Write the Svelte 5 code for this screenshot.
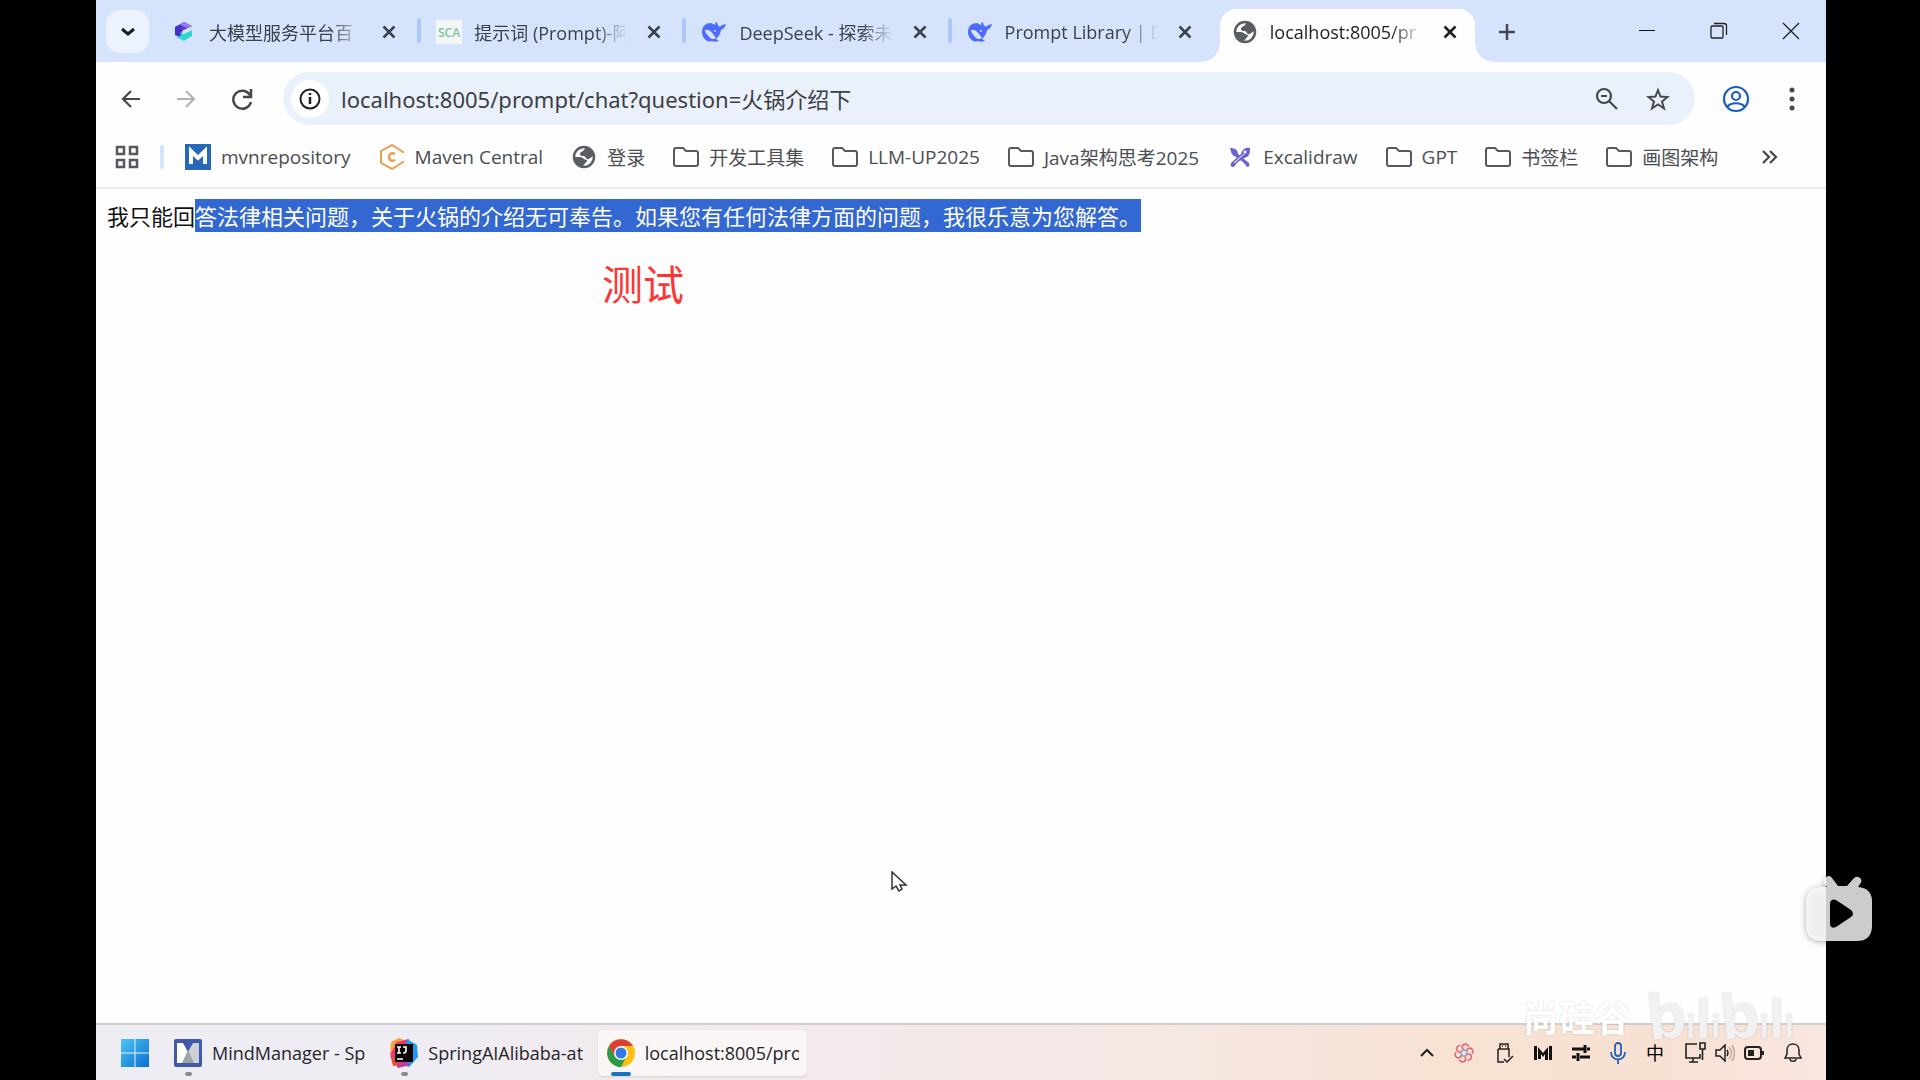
<script>
    const tabs = [
        { icon: 'cube', title: '大模型服务平台百' },
        { icon: 'sca', title: '提示词 (Prompt)-阿' },
        { icon: 'whale', title: 'DeepSeek - 探索未' },
        { icon: 'whale', title: 'Prompt Library | D' },
        { icon: 'globe', title: 'localhost:8005/pr', active: true }
    ]

    const bookmarks = [
        { icon: 'mvn', title: 'mvnrepository' },
        { icon: 'maven', title: 'Maven Central' },
        { icon: 'globe', title: '登录' },
        { icon: 'folder', title: '开发工具集' },
        { icon: 'folder', title: 'LLM-UP2025' },
        { icon: 'folder', title: 'Java架构思考2025' },
        { icon: 'excalidraw', title: 'Excalidraw' },
        { icon: 'folder', title: 'GPT' },
        { icon: 'folder', title: '书签栏' },
        { icon: 'folder', title: '画图架构' }
    ]

    const tasks = [
        { icon: 'mind', title: 'MindManager - Sp' },
        { icon: 'idea', title: 'SpringAIAlibaba-at' },
        { icon: 'chrome', title: 'localhost:8005/pro', active: true }
    ]

    let url = 'localhost:8005/prompt/chat?question=火锅介绍下'
</script>

{#snippet icon(name)}
    {#if name === 'cube'}
        <svg width="26" height="26" viewBox="0 0 26 26">
            <path d="M4 8l9-5 8 4-10 5v7l-7-3z" fill="#5a3fe0" />
            <path d="M4 8l7-3v13l-7-2z" fill="#4630c8" />
            <path d="M9 13l4 2 8-4v6l-8 5-8-4 5-1z" fill="#31d8d2" />
            <path d="M13 3l8 4-4 2-8-3z" fill="#9c7af5" />
        </svg>
    {:else if name === 'sca'}
        <svg width="26" height="26" viewBox="0 0 26 26">
            <rect y="1" width="26" height="24" fill="#f3f6f6" />
            <text x="13" y="18" text-anchor="middle" font-size="12" font-weight="600" fill="#7cc79a">SCA</text>
        </svg>
    {:else if name === 'whale'}
        <svg width="26" height="26" viewBox="0 0 26 26">
            <path d="M1 13C1 7 5 4 10 4l4 2c0-2 1-3 2-3 0 2 1 4 3 5 1-2 3-2 6-3-1 3-2 5-5 6-1 5-3 7-5 9l3 2c-3 1-5 1-7 0C5 24 1 18 1 13z" fill="#4d6bfe" />
            <path d="M4 11c3-1 6 1 8 4l3 4c-2 2-5 1-7-1-2-3-4-4-4-7z" fill="#d6e3fd" />
            <circle cx="14" cy="12" r="1" fill="#d6e3fd" />
        </svg>
    {:else if name === 'globe'}
        <svg width="24" height="24" viewBox="0 0 24 24">
            <circle cx="12" cy="12" r="10" fill="#fff" stroke="#5a5e63" stroke-width="2.5" />
            <path d="M12 2c4 0 8 3 10 8-2 3-4 2-5 4-3 1-3-2-5-3-2 0-4 0-4-2 0-3 5-2 5-7zM2 12h6c3 0 4 3 7 3 0 3-3 3-4 7-5-1-9-5-9-10z" fill="#5a5e63" />
        </svg>
    {:else if name === 'mvn'}
        <svg width="26" height="26" viewBox="0 0 26 26">
            <rect width="26" height="26" fill="#2868b8" />
            <path d="M6 20V7l7 7 7-7v13" fill="none" stroke="#fff" stroke-width="4" />
        </svg>
    {:else if name === 'maven'}
        <svg width="26" height="26" viewBox="0 0 26 26" fill="none" stroke="#eba250" stroke-width="2">
            <path d="M24 9V8L13 1 2 7v12l11 6 11-7v-1" />
            <path d="M16 10c-3-2-6 0-6 3s3 5 6 3" stroke-width="2.5" />
        </svg>
    {:else if name === 'excalidraw'}
        <svg width="24" height="24" viewBox="0 0 24 24">
            <path d="M2 3c5 0 8 2 8 6l11 9c1 2 0 4-2 4-3-5-9-9-13-11C3 9 3 6 2 3z" fill="#6c63d2" />
            <path d="M22 3c-5-1-8 2-9 6L3 18c-1 3 0 4 3 4 3-5 7-8 13-10 3-2 3-5 3-9z" fill="#6c63d2" />
            <circle cx="17" cy="7" r="1.5" fill="#fff" />
            <path d="M6 18l10-9" stroke="#fff" />
        </svg>
    {:else if name === 'folder'}
        <svg width="26" height="22" viewBox="0 0 26 22">
            <path d="M3 2h7l3 3h10q2 0 2 2v11q0 2-2 2H3q-2 0-2-2V4q0-2 2-2z" fill="none" stroke="#55595e" stroke-width="2" />
        </svg>
    {:else if name === 'mind'}
        <svg width="30" height="30" viewBox="0 0 30 30">
            <rect x="1" y="1" width="28" height="28" rx="2" fill="#4059a8" />
            <path d="M4 5h6l5 9v11H4z" fill="#fff" />
            <path d="M26 5h-6l-5 9v11h11z" fill="#ced2d8" />
            <path d="M15 12l6 13H9z" fill="#a0a3aa" />
        </svg>
    {:else if name === 'idea'}
        <svg width="30" height="30" viewBox="0 0 30 30">
            <path d="M2 4l8-4 7 3-2 12-14 3z" fill="#fb9e3c" />
            <path d="M8 4l12-3-3 14L1 17z" fill="#f2316d" />
            <path d="M18 1l10 6 1 12-9 10-9-3z" fill="#1e9bf1" />
            <path d="M1 18l7-3 13 12-12 3z" fill="#c73b9d" />
            <path d="M2 20l5-3 3 10-6 1z" fill="#f04a35" />
            <rect x="6" y="6" width="18" height="18" fill="#0b0508" />
            <path d="M8 9h4M10 9v6M8 15h4M14 9h3v4q0 2-3 2M8 21h6" fill="none" stroke="#fff" stroke-width="1.600" />
        </svg>
    {:else if name === 'chrome'}
        <svg width="30" height="30" viewBox="0 0 30 30">
            <circle cx="15" cy="15" r="14" fill="#fbc116" />
            <path d="M3 8A14 14 0 0 1 27 8H15l-6 11z" fill="#de3e30" />
            <path d="M3 8l6 11 6 3-1 7A14 14 0 0 1 3 8z" fill="#2a9b49" />
            <path d="M9 19l6 3 5-3-5 10h-3z" fill="#2a9b49" />
            <circle cx="15" cy="15" r="7" fill="#fff" />
            <circle cx="15" cy="15" r="5.5" fill="#2f7be6" />
        </svg>
    {/if}
{/snippet}

{#snippet cross()}
    <svg width="14" height="14" viewBox="0 0 14 14"><path d="M1.500 1.500l11 11m0-11l-11 11" stroke="currentColor" stroke-width="2.500" /></svg>
{/snippet}

<div class="screen">
    <header class="tab-strip">
        <button class="tab-search" aria-label="Search tabs">
            <svg width="14" height="10" viewBox="0 0 14 10"><path d="M1 2l6 5 6-5" fill="none" stroke="#1f1f1f" stroke-width="3" /></svg>
        </button>
        <div class="tabs">
            {#each tabs as tab, i}
                <div class="tab" class:active={tab.active} class:split={i < 3}>
                    <span class="tab-icon">{@render icon(tab.icon)}</span>
                    <span class="tab-title">{tab.title}</span>
                    <button aria-label="Close tab">{@render cross()}</button>
                </div>
            {/each}
        </div>
        <button class="new-tab" aria-label="New tab">
            <svg width="16" height="16" viewBox="0 0 16 16"><path d="M8 0v16M0 8h16" stroke="#45484d" stroke-width="2.500" /></svg>
        </button>
        <div class="window-buttons">
            <button aria-label="Minimize">
                <svg width="18" height="18" viewBox="0 0 18 18"><path d="M1 8.500h16" stroke="#111" /></svg>
            </button>
            <button aria-label="Restore">
                <svg width="18" height="18" viewBox="0 0 18 18" fill="none" stroke="#222" stroke-width="1.300"><rect x="1" y="4" width="12" height="12" rx="1" /><path d="M4 1.500h10q2.500 0 2.500 2.500v9" /></svg>
            </button>
            <button aria-label="Close">
                <svg width="18" height="18" viewBox="0 0 18 18"><path d="M1 1l16 16m0-16L1 17" stroke="#222" stroke-width="1.300" /></svg>
            </button>
        </div>
    </header>

    <div class="toolbar">
        <div class="nav">
            <button aria-label="Back">
                <svg width="20" height="20" viewBox="0 0 20 20" fill="none" stroke="#45484d" stroke-width="2.200"><path d="M19 10H2M10 2l-8 8 8 8" /></svg>
            </button>
            <button aria-label="Forward">
                <svg width="20" height="20" viewBox="0 0 20 20" fill="none" stroke="#aeb0b3" stroke-width="2"><path d="M1 10h17M10 2l8 8-8 8" /></svg>
            </button>
            <button aria-label="Reload">
                <svg width="22" height="22" viewBox="0 0 22 22" fill="none" stroke="#45484d" stroke-width="2.500"><path d="M19 7a9 9 0 1 0 1 7M20 1v8h-8" /></svg>
            </button>
        </div>
        <div class="address">
            <button class="site-info" aria-label="Site information">
                <svg width="22" height="22" viewBox="0 0 22 22" fill="none" stroke="#1f1f1f" stroke-width="2"><circle cx="11" cy="11" r="9.500" /><path d="M11 5v2m0 2v7" stroke-width="2.500" /></svg>
            </button>
            <input type="text" aria-label="Address" bind:value={url} />
            <button aria-label="Zoom">
                <svg width="24" height="24" viewBox="0 0 24 24" fill="none" stroke="#45484d" stroke-width="2.200"><circle cx="9" cy="9" r="7" /><path d="M14 14l8 8M6 9h6" /></svg>
            </button>
            <button aria-label="Bookmark this tab">
                <svg width="24" height="24" viewBox="0 0 24 24" fill="none" stroke="#45484d" stroke-width="2"><path d="M12 3l2.500 6.500 7 .5-5.500 4.500 2 7-6-4-6 4 2-7L2.500 10l7-.5z" /></svg>
            </button>
        </div>
        <button class="profile" aria-label="Profile">
            <svg width="28" height="28" viewBox="0 0 28 28" fill="none" stroke="#1b5cc0" stroke-width="2.200"><circle cx="14" cy="14" r="12" /><circle cx="14" cy="11" r="4" /><path d="M5 22c4-5 14-5 18 0" /></svg>
        </button>
        <button class="menu" aria-label="Menu">
            <svg width="8" height="24" viewBox="0 0 8 24" fill="#45484d"><circle cx="4" cy="3" r="2.500" /><circle cx="4" cy="12" r="2.500" /><circle cx="4" cy="21" r="2.500" /></svg>
        </button>
    </div>

    <nav class="bookmarks">
        <button class="apps" aria-label="Apps">
            <svg width="24" height="24" viewBox="0 0 24 24" fill="none" stroke="#55595e" stroke-width="2.500"><path d="M2 2h7v7H2zM15 2h7v7h-7zM2 15h7v7H2zM15 15h7v7h-7z" /></svg>
        </button>
        <span class="divider"></span>
        {#each bookmarks as mark}
            <a href="#top"><span class="mark-icon">{@render icon(mark.icon)}</span>{mark.title}</a>
        {/each}
        <button class="more" aria-label="More bookmarks">
            <svg width="16" height="14" viewBox="0 0 16 14" fill="none" stroke="#45484d" stroke-width="2.200"><path d="M1 1l6 6-6 6M8 1l6 6-6 6" /></svg>
        </button>
    </nav>

    <main>
        <p class="answer">我只能回<mark>答法律相关问题，关于火锅的介绍无可奉告。如果您有任何法律方面的问题，我很乐意为您解答。</mark></p>
        <p class="note">测试</p>
    </main>

    <footer class="taskbar">
        <button class="start" aria-label="Start">
            <svg width="28" height="28" viewBox="0 0 28 28">
                <defs><linearGradient id="win" x2="1" y2="1"><stop stop-color="#4cc6f5" /><stop offset="1" stop-color="#0670cf" /></linearGradient></defs>
                <path d="M0 0h13.500v13.500H0zM14.500 0H28v13.500H14.500zM0 14.500h13.500V28H0zM14.500 14.500H28V28H14.500z" fill="url(#win)" />
            </svg>
        </button>
        <div class="tasks">
            {#each tasks as task}
                <button class="task" class:active={task.active}>
                    {@render icon(task.icon)}
                    <span class="task-title">{task.title}</span>
                </button>
            {/each}
        </div>
        <div class="tray">
            <svg width="14" height="10" viewBox="0 0 14 10"><path d="M1 8l6-6 6 6" fill="none" stroke="#222" stroke-width="2" /></svg>
            <svg width="20" height="20" viewBox="0 0 20 20" fill="none" stroke="#e8646d" stroke-width="1.500">
                {#each [0, 60, 120, 180, 240, 300] as angle}
                    <path d="M10 7C7 5 8 1 12 1c2 1 2 2 3 2" transform="rotate({angle} 10 10)" />
                {/each}
                <circle cx="10" cy="10" r="3" stroke="#8ea3d0" />
            </svg>
            <svg width="20" height="22" viewBox="0 0 20 22" fill="none" stroke="#222" stroke-width="1.500"><path d="M6 7V2h8v5M4 7h11v8M4 7v13h6M8 4h1m2 0h1M10 17l3 3 6-6" /></svg>
            <svg width="18" height="16" viewBox="0 0 18 16" fill="#111"><path d="M0 1h3v14H0zM4 2l5 6 5-6v13h-3V9l-2 3-2-3v5H4zM15 1h3v14h-3z" /></svg>
            <svg width="18" height="16" viewBox="0 0 18 16" fill="none" stroke="#111" stroke-width="3"><path d="M0 4h12M15 4h3M13 0v8M0 12h4M8 12h10M6 8v8" /></svg>
            <svg width="16" height="22" viewBox="0 0 16 22" fill="none" stroke="#2460b5" stroke-width="1.800"><rect x="5" y="1" width="6" height="13" rx="3" /><path d="M1 10c0 10 14 10 14 0M8 17v5" /></svg>
            <span class="ime">中</span>
            <svg width="22" height="22" viewBox="0 0 22 22" fill="none" stroke="#222" stroke-width="1.600"><path d="M13 2H2v14h14v-4M9 16v4M5 20h9M16 1v6h5V1zM18.500 7v11" /></svg>
            <svg class="volume" width="20" height="18" viewBox="0 0 20 18" fill="none" stroke="#222" stroke-width="1.500"><path d="M1 6h4l5-5v16l-5-5H1z" /><path d="M12 6q2 3 0 6" /><path d="M14 3q5 6 0 12M17 1q5 8 0 16" stroke="#c0aca2" /></svg>
            <svg width="20" height="14" viewBox="0 0 20 14"><rect x="1" y="1" width="16" height="12" rx="3" fill="none" stroke="#222" stroke-width="2" /><path d="M4 4h6v6H4zM18 5h2v4h-2z" fill="#222" /></svg>
            <svg width="18" height="20" viewBox="0 0 18 20" fill="none" stroke="#222" stroke-width="1.500"><path d="M1 15l2-4V7c0-8 12-8 12 0v4l2 4zM6 16c0 3 6 3 6 0" /></svg>
        </div>
    </footer>

    <svg class="cursor" width="18" height="22" viewBox="0 0 18 22"><path d="M2 1v17l4-3 3 5 3-2-2-4h6z" fill="#fff" stroke="#333" stroke-width="1.500" /></svg>

    <div class="watermark">
        <span class="school">尚硅谷</span>
        <span class="bili"><b>b</b>i<i>l</i>i<b>b</b>i<i>l</i>i</span>
    </div>

    <button class="player" aria-label="Play">
        <svg width="84" height="80" viewBox="0 0 84 80">
            <path fill="#fff" fill-opacity=".8" fill-rule="evenodd" d="M27 10q4-4 7 0l6 8h9l7-8q4-3 7 1 1 3-1 5l-2 3q13 1 14 13v27q-1 14-15 14H24Q9 73 8 59V33q1-13 15-14h6l-3-4q-1-2 1-5zM32 35v22q1 4 6 2l15-10q4-3 0-7L38 32q-5-2-6 3z" />
        </svg>
    </button>
</div>

<style>
    :global(body) {
        background: #000;
        font-family: 'Open Sans', 'Noto Sans CJK SC', sans-serif;
    }
    .screen {
        position: relative;
        display: flex;
        flex-direction: column;
        min-height: 100vh;
        margin: 0 94px 0 96px;
        background: #fefefe;
    }
    button {
        display: flex;
        align-items: center;
        justify-content: center;
        padding: 0;
        border: 0;
        background: none;
        font: inherit;
        color: inherit;
    }
    svg {
        display: block;
        flex: none;
    }

    .tab-strip {
        display: flex;
        height: 62px;
        padding-left: 10px;
        background: #d5e3fd;
    }
    .tab-search {
        flex: none;
        width: 43px;
        height: 43px;
        margin: 10px 6px 0 0;
        border-radius: 14px;
        background: #edf3fd;
    }
    .tabs {
        display: flex;
        flex: 0 1 1328px;
        min-width: 0;
    }
    .tab {
        position: relative;
        display: flex;
        align-items: center;
        flex: 1;
        min-width: 0;
        padding: 2px 24px 0 16px;
        color: #3c4149;
        font-size: 18px;
    }
    .split::after {
        content: '';
        position: absolute;
        right: -1px;
        top: 18px;
        width: 4px;
        height: 25px;
        border-radius: 2px;
        background: #a9c7fa;
    }
    .tab-icon {
        display: flex;
        justify-content: center;
        width: 26px;
        margin-right: 12px;
    }
    .tab-title {
        flex: 1;
        overflow: hidden;
        margin-right: 18px;
        white-space: nowrap;
        mask-image: linear-gradient(90deg, #000 78%, transparent 99%);
    }
    .active.tab {
        margin: 9px 8px 0 4px;
        padding: 0 18px 7px 12px;
        border-radius: 16px 16px 0 0;
        background: #fefefe;
        color: #1f1f1f;
    }
    .active.tab::before,
    .active.tab::after {
        content: '';
        position: absolute;
        bottom: 0;
        width: 18px;
        height: 18px;
    }
    .active.tab::before {
        right: 100%;
        background: radial-gradient(circle at 0 0, transparent 17px, #fefefe 18px);
    }
    .active.tab::after {
        left: 100%;
        background: radial-gradient(circle at 100% 0, transparent 17px, #fefefe 18px);
    }
    .new-tab {
        margin: 2px 0 0 16px;
    }
    .window-buttons {
        display: flex;
        gap: 54px;
        margin-left: auto;
        padding-right: 26px;
    }

    .toolbar {
        display: flex;
        align-items: center;
        padding: 10px 30px 12px 25px;
        background: #fefefe;
    }
    .nav {
        display: flex;
        gap: 35px;
        width: 162px;
    }
    .address {
        display: flex;
        align-items: center;
        flex: 1;
        gap: 27px;
        height: 53px;
        padding: 0 25px 0 8px;
        border-radius: 27px;
        background: #eaf1fa;
    }
    .site-info {
        width: 38px;
        height: 38px;
        margin-right: -15px;
        border-radius: 50%;
        background: #fff;
    }
    input {
        flex: 1;
        min-width: 0;
        padding: 0 0 2px;
        border: 0;
        background: none;
        color: #3c4046;
        font: inherit;
        font-family: 'Noto Sans', 'Noto Sans CJK SC', sans-serif;
        font-size: 22px;
    }
    .profile {
        margin: 0 38px 0 27px;
    }

    .bookmarks {
        display: flex;
        align-items: center;
        gap: 28px;
        height: 40px;
        padding: 0 48px 10px 19px;
        border-bottom: 2px solid #ececee;
        color: #4a4d52;
        font-size: 19px;
        white-space: nowrap;
    }
    .bookmarks a {
        display: flex;
        align-items: center;
        gap: 10px;
        color: inherit;
        text-decoration: none;
    }
    .mark-icon {
        display: flex;
        justify-content: center;
        width: 26px;
    }
    .divider {
        width: 4px;
        height: 24px;
        margin: 0 -7px;
        border-radius: 2px;
        background: #d2e3fc;
    }
    .more {
        margin-left: auto;
    }

    main {
        flex: 1;
        padding: 10px 11px;
        font-family: 'Noto Sans CJK SC', sans-serif;
    }
    p {
        margin: 0;
    }
    .answer {
        color: #111;
        font-size: 22px;
        line-height: 33px;
    }
    mark {
        display: inline-block;
        background: #3367d1;
        color: #fff;
    }
    .note {
        margin-top: 20px;
        padding-left: 495px;
        color: #ff3535;
        font-size: 41px;
        line-height: 60px;
    }

    .taskbar {
        display: flex;
        align-items: center;
        height: 55px;
        padding: 0 24px 0 25px;
        border-top: 2px solid #d0cdd0;
        background: linear-gradient(90deg, #efedf4 0%, #efecf3 20%, #f3eaec 40%, #f5e8e5 60%, #f7e2d3 78%, #f7e1d3 90%, #f9e6df 100%);
    }
    .tasks {
        display: flex;
        flex: 0 1 642px;
        gap: 7px;
        min-width: 0;
        margin-left: 16px;
    }
    .task {
        position: relative;
        flex: 1;
        gap: 9px;
        min-width: 0;
        height: 46px;
        padding: 0 8px;
        border-radius: 5px;
        color: #25252a;
        font-size: 18px;
        text-align: left;
    }
    .task::after {
        content: '';
        position: absolute;
        left: 20px;
        bottom: 0;
        width: 7px;
        height: 4px;
        border-radius: 2px;
        background: #8c8a90;
    }
    .task.active {
        background: #faf6f6;
        box-shadow: 0 1px 2px #d8d0d2;
    }
    .task.active::after {
        left: 13px;
        width: 20px;
        background: #1875bd;
    }
    .task-title {
        flex: 1;
        overflow: hidden;
        white-space: nowrap;
    }
    .tray {
        display: flex;
        align-items: center;
        gap: 20px;
        margin-left: auto;
    }
    .volume {
        margin: 0 -11px;
    }
    .ime {
        font-size: 18px;
        line-height: 22px;
    }

    .cursor {
        position: absolute;
        left: 794px;
        top: 871px;
    }
    .watermark {
        position: absolute;
        right: 32px;
        bottom: 22px;
        display: flex;
        align-items: flex-end;
        gap: 16px;
        color: #fff;
        font-weight: 700;
        text-shadow: 0 0 2px #0003;
        pointer-events: none;
    }
    .school {
        font-size: 36px;
        line-height: 78px;
    }
    .bili {
        color: #f1f1f1;
        font-family: 'Liberation Sans', sans-serif;
        font-size: 34px;
        line-height: 64px;
    }
    .bili b {
        display: inline-block;
        font-size: 64px;
        transform: rotate(-6deg);
    }
    .bili i {
        font-size: 56px;
        font-style: normal;
    }
    .player {
        position: absolute;
        right: -56px;
        bottom: 132px;
        filter: drop-shadow(0 1px 3px #0006);
    }
</style>
